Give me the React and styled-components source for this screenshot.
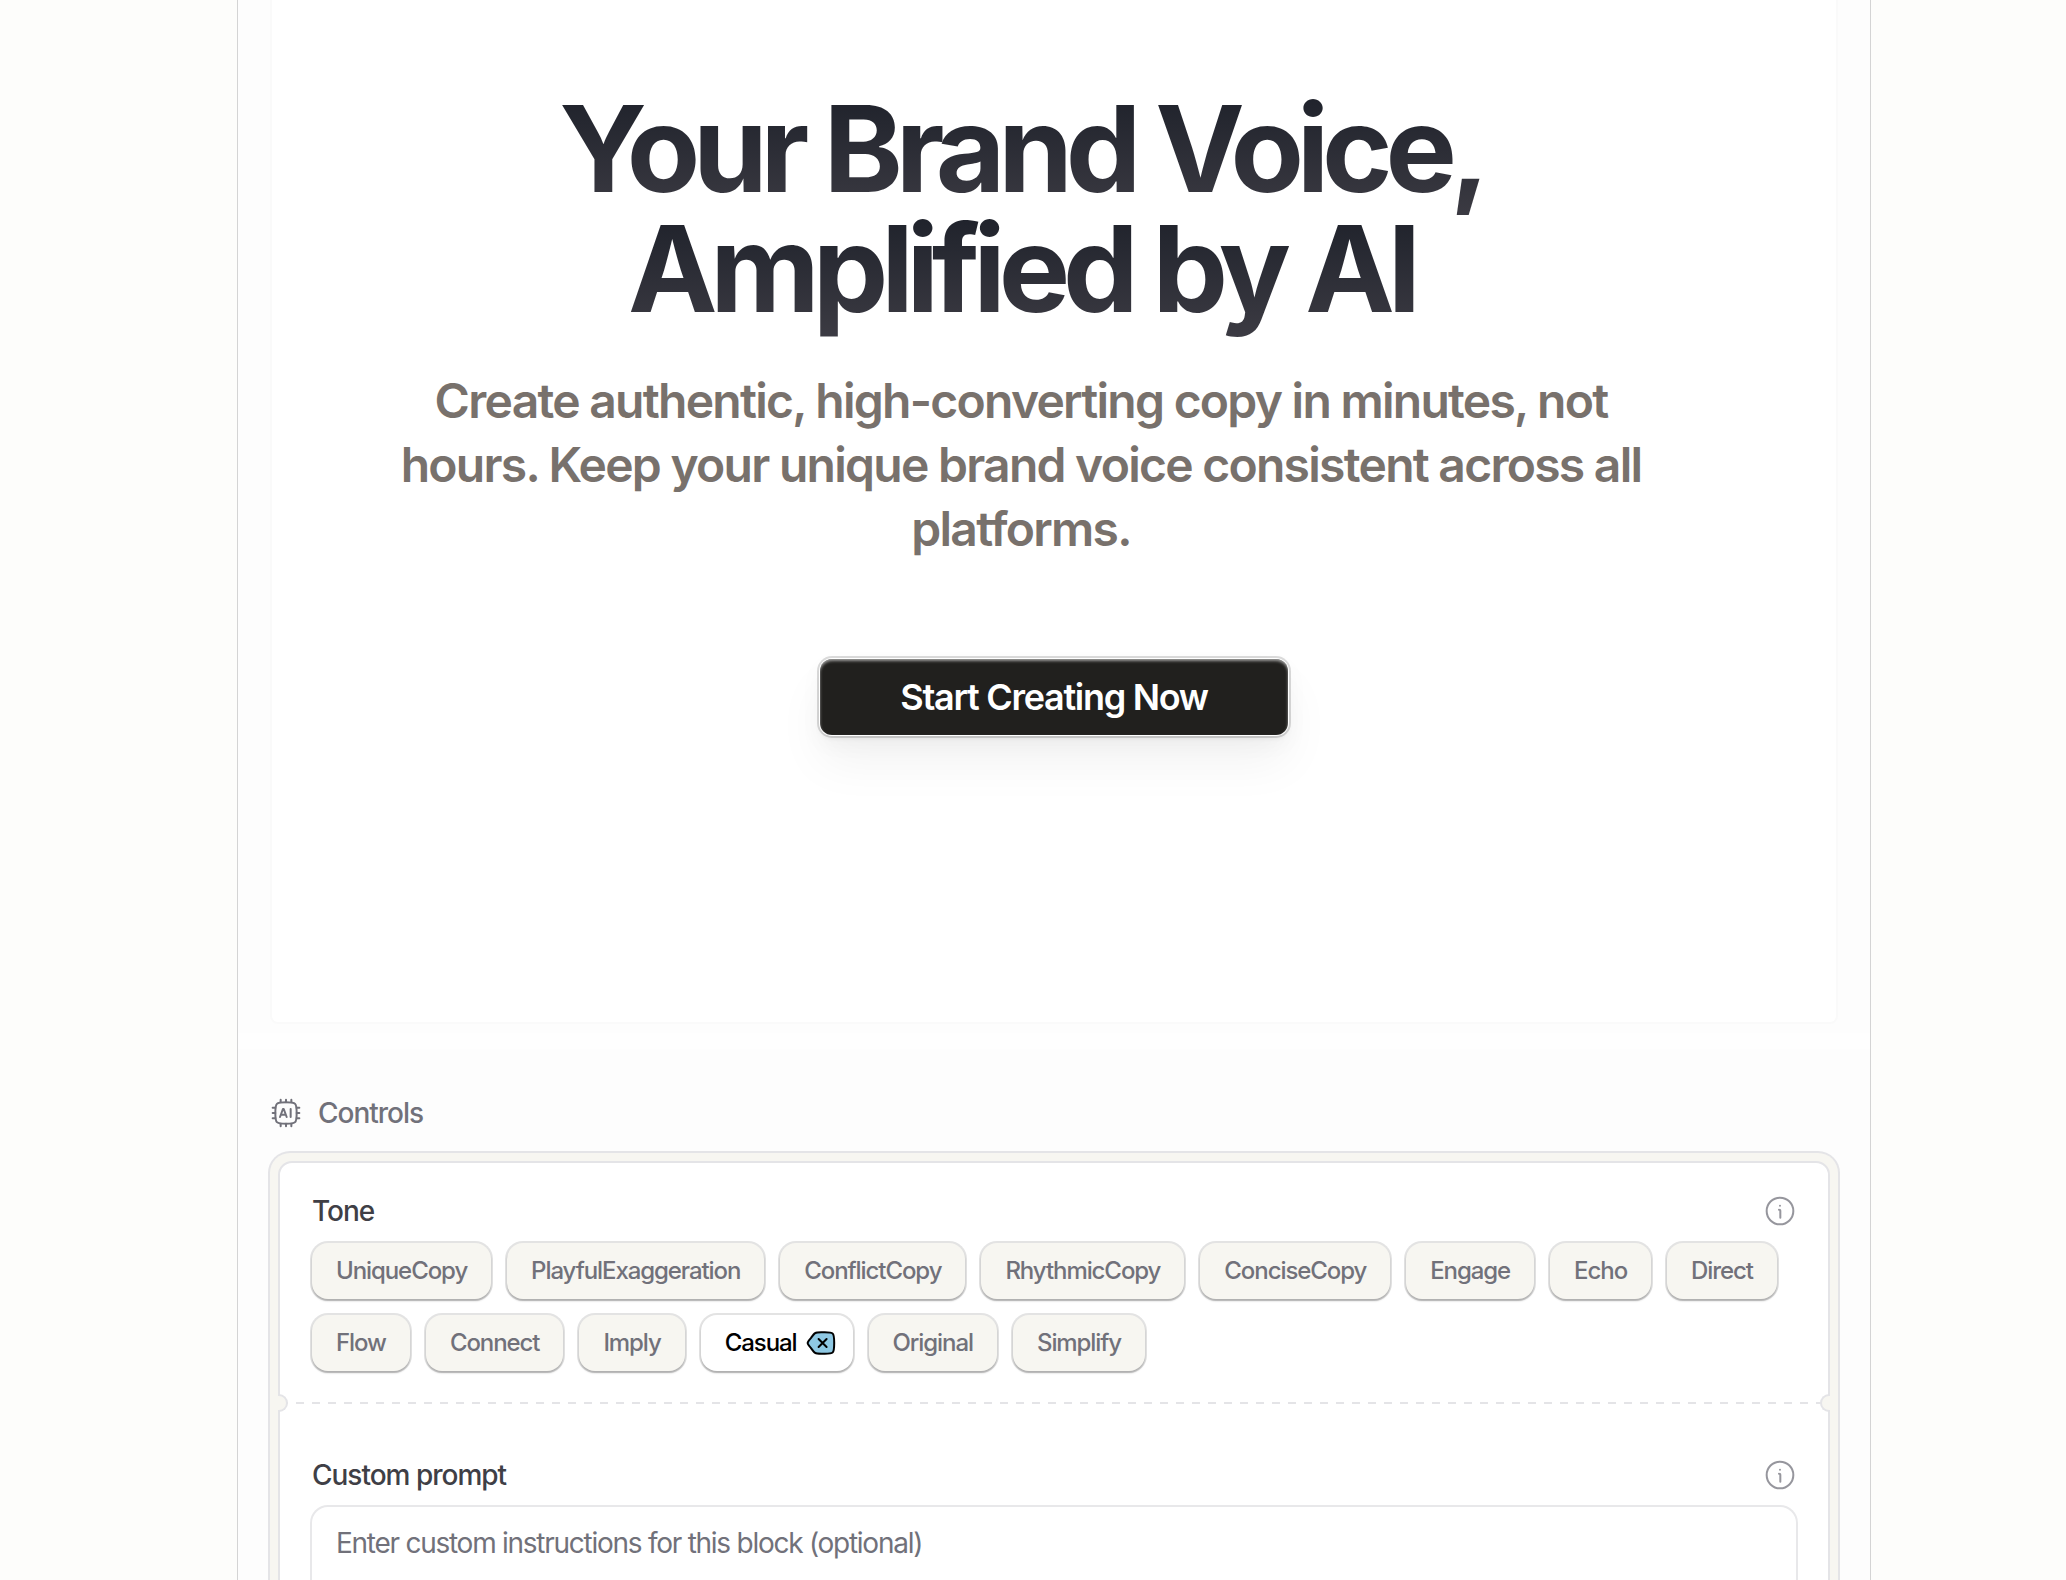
import React, { useState } from "react";
import styled, { createGlobalStyle } from "styled-components";

const tracking = {
  display: "-0.06em",
  copy: "-0.036em",
  ui: "-0.045em",
};

const GlobalStyle = createGlobalStyle`
  *, *::before, *::after { box-sizing: border-box; }
  body {
    margin: 0;
    background: #fdfdfb;
    font-family: Inter, "Liberation Sans", sans-serif;
    -webkit-font-smoothing: antialiased;
  }
  button, textarea { font: inherit; }
`;

const Page = styled.div`
  display: flex;
  height: 100vh;
  overflow: hidden;
  padding: 0 195px 0 237px;
`;

const Column = styled.main`
  flex: 1;
  min-width: 0;
  min-height: 100%;
  height: max-content;
  background: #fdfdfd;
  border: solid #d4d4d4;
  border-width: 0 1px;
`;

const Preview = styled.section`
  padding: 0 32px 9px;
  border-bottom: 16px solid #fefefe;
`;

const HeroCard = styled.div`
  display: flex;
  flex-direction: column;
  align-items: center;
  min-height: 1024px;
  padding: 89px 64px 0;
  background: #fff;
  border: 2px solid #fafafa;
  border-top: 0;
  border-radius: 0 0 8px 8px;
`;

const HeroText = styled.div`
  align-self: stretch;
  padding-right: 66px;
  text-align: center;
`;

/* The gradient tile is one line tall, so each line of the title fades on its own. */
const Title = styled.h1`
  margin: 0 0 28px;
  padding-bottom: 12px;
  font-size: 120px;
  line-height: 120px;
  font-weight: 700;
  letter-spacing: ${tracking.display};
  color: transparent;
  background: linear-gradient(#20232c, #3c3b43) 0 10px / 100% 120px repeat-y;
  -webkit-background-clip: text;
  background-clip: text;
`;

const Subtitle = styled.p`
  max-width: 1280px;
  margin: 0 auto;
  font-size: 48px;
  line-height: 64px;
  font-weight: 600;
  letter-spacing: ${tracking.copy};
  color: #78716c;
`;

const CallToAction = styled.button`
  margin-top: 98px;
  height: 76px;
  padding: 0 80px;
  border: 0;
  border-radius: 12px;
  background: #21201e;
  color: #fff;
  font-size: 36px;
  line-height: 44px;
  font-weight: 600;
  letter-spacing: ${tracking.copy};
  box-shadow:
    inset 0 2px 3px rgba(255, 255, 255, 0.55),
    0 0 0 1px #fff,
    0 0 0 3px rgba(0, 0, 0, 0.14),
    0 4px 4px rgba(0, 0, 0, 0.05),
    0 8px 24px rgba(0, 0, 0, 0.04),
    0 28px 48px rgba(0, 0, 0, 0.05);
`;

const Controls = styled.section`
  padding: 48px 32px 32px;
`;

const ControlsTitle = styled.h2`
  display: flex;
  align-items: center;
  gap: 16px;
  margin: 0 0 24px;
  font-size: 28px;
  line-height: 32px;
  font-weight: 500;
  letter-spacing: ${tracking.copy};
  color: #71717a;
`;

const Panel = styled.div`
  padding: 8px;
  border-radius: 20px;
  background: #f7f6f1;
  box-shadow: 0 0 0 2px #e4e4e7;
`;

const PanelBody = styled.div`
  border: 2px solid #e4e4e7;
  border-radius: 14px;
  background: #fff;
`;

const Group = styled.div`
  padding: ${(p) => (p.$last ? "55px" : "32px")} 32px ${(p) => (p.$last ? "32px" : "31px")};
`;

const GroupHead = styled.div`
  display: flex;
  align-items: center;
  justify-content: space-between;
  margin-bottom: 16px;
`;

const GroupLabel = styled.label`
  font-size: 28px;
  line-height: 32px;
  font-weight: 500;
  letter-spacing: ${tracking.copy};
  color: #3f3f46;
`;

const InfoButton = styled.button`
  display: flex;
  width: 32px;
  height: 32px;
  padding: 0;
  border: 0;
  background: none;
  color: #96969d;
`;

const Chips = styled.div`
  display: flex;
  flex-wrap: wrap;
  gap: 16px;
`;

const Chip = styled.button`
  display: flex;
  align-items: center;
  gap: 8px;
  height: 56px;
  padding: 0 ${(p) => (p.$on ? "16px" : "24px")} 0 24px;
  border: 0;
  border-radius: 16px;
  background: ${(p) => (p.$on ? "#fff" : "#f7f6f1")};
  color: ${(p) => (p.$on ? "#000" : "#71717a")};
  font-size: 24px;
  line-height: 32px;
  font-weight: 500;
  letter-spacing: ${tracking.ui};
  box-shadow: 0 0 0 2px rgba(24, 24, 27, 0.12), 0 2px 2px rgba(0, 0, 0, 0.24);
`;

const Divider = styled.div`
  position: relative;
  height: 2px;
  background: repeating-linear-gradient(90deg, #e4e4e7 0 8px, transparent 8px 16px);
`;

const Notch = styled.span`
  position: absolute;
  top: -8px;
  ${(p) => p.$side}: -2px;
  width: 10px;
  height: 18px;
  border: 2px solid #e4e4e7;
  border-${(p) => p.$side}: 0;
  border-radius: ${(p) => (p.$side === "left" ? "0 10px 10px 0" : "10px 0 0 10px")};
  background: #f7f6f1;
`;

const Prompt = styled.textarea`
  display: block;
  width: 100%;
  height: 160px;
  padding: 16px 24px;
  border: 0;
  border-radius: 16px;
  outline: none;
  resize: none;
  background: #fff;
  color: #3f3f46;
  font-size: 28px;
  line-height: 40px;
  letter-spacing: ${tracking.ui};
  box-shadow: 0 0 0 2px #e8e8ea;
  &::placeholder { color: #71717a; opacity: 1; }
`;

const iconProps = {
  width: 32,
  height: 32,
  viewBox: "0 0 24 24",
  fill: "none",
  stroke: "currentColor",
  strokeWidth: 1.5,
  strokeLinecap: "round",
  strokeLinejoin: "round",
  "aria-hidden": true,
};

const ChipIcon = () => (
  <svg {...iconProps}>
    <path d="M4 12c0-3.770 0-5.660 1.170-6.830C6.340 4 8.230 4 12 4s5.660 0 6.830 1.170C20 6.340 20 8.230 20 12s0 5.660-1.170 6.830C17.660 20 15.770 20 12 20s-5.660 0-6.830-1.170C4 17.660 4 15.770 4 12Z" />
    <path d="M8 2v2M12 2v2M16 2v2M8 20v2M12 20v2M16 20v2M22 8h-2M22 12h-2M22 16h-2M4 8H2M4 12H2M4 16H2" />
    <path d="m7.500 15 2.200-6h.6l2.200 6M8.300 13.300h3.400M15.500 9v6" />
  </svg>
);

const InfoIcon = () => (
  <svg {...iconProps}>
    <circle cx="12" cy="12" r="10" />
    <path d="M12.242 17v-5c0-.471 0-.707-.146-.854C11.949 11 11.714 11 11.242 11M11.992 8h.009" />
  </svg>
);

const RemoveIcon = () => (
  <svg {...iconProps}>
    <path
      fill="#8ec8e3"
      d="M7.600 4.600C8.600 4 9.800 4 12.200 4h2.600c3.300 0 5 0 6 1s1.100 2.600 1.100 7-.1 6-1.100 7-2.700 1-6 1h-2.600c-2.400 0-3.600 0-4.600-.6-1-.6-1.900-1.900-3.200-3.700C2.700 13.800 2 12.900 2 12s.7-1.800 2.400-3.700C5.700 6.500 6.600 5.200 7.600 4.600Z"
    />
    <path d="m10.200 9 6 6M16.200 9l-6 6" />
  </svg>
);

const TONES = [
  "UniqueCopy", "PlayfulExaggeration", "ConflictCopy", "RhythmicCopy", "ConciseCopy",
  "Engage", "Echo", "Direct", "Flow", "Connect", "Imply", "Casual", "Original", "Simplify",
];

export default function App() {
  const [tone, setTone] = useState("Casual");
  return (
    <>
      <GlobalStyle />
      <Page>
        <Column>
          <Preview>
            <HeroCard>
              <HeroText>
                <Title>
                  Your Brand Voice,
                  <br />
                  Amplified by AI
                </Title>
                <Subtitle>
                  Create authentic, high-converting copy in minutes, not hours. Keep your unique
                  brand voice consistent across all platforms.
                </Subtitle>
              </HeroText>
              <CallToAction type="button">Start Creating Now</CallToAction>
            </HeroCard>
          </Preview>
          <Controls>
            <ControlsTitle>
              <ChipIcon />
              Controls
            </ControlsTitle>
            <Panel>
              <PanelBody>
                <Group>
                  <GroupHead>
                    <GroupLabel as="span" id="tone-label">Tone</GroupLabel>
                    <InfoButton type="button" aria-label="About tone"><InfoIcon /></InfoButton>
                  </GroupHead>
                  <Chips role="group" aria-labelledby="tone-label">
                    {TONES.map((name) => (
                      <Chip
                        key={name}
                        type="button"
                        $on={tone === name}
                        aria-pressed={tone === name}
                        onClick={() => setTone(tone === name ? null : name)}
                      >
                        {name}
                        {tone === name && <RemoveIcon />}
                      </Chip>
                    ))}
                  </Chips>
                </Group>
                <Divider>
                  <Notch $side="left" />
                  <Notch $side="right" />
                </Divider>
                <Group $last>
                  <GroupHead>
                    <GroupLabel htmlFor="prompt">Custom prompt</GroupLabel>
                    <InfoButton type="button" aria-label="About custom prompt"><InfoIcon /></InfoButton>
                  </GroupHead>
                  <Prompt id="prompt" placeholder="Enter custom instructions for this block (optional)" />
                </Group>
              </PanelBody>
            </Panel>
          </Controls>
        </Column>
      </Page>
    </>
  );
}
